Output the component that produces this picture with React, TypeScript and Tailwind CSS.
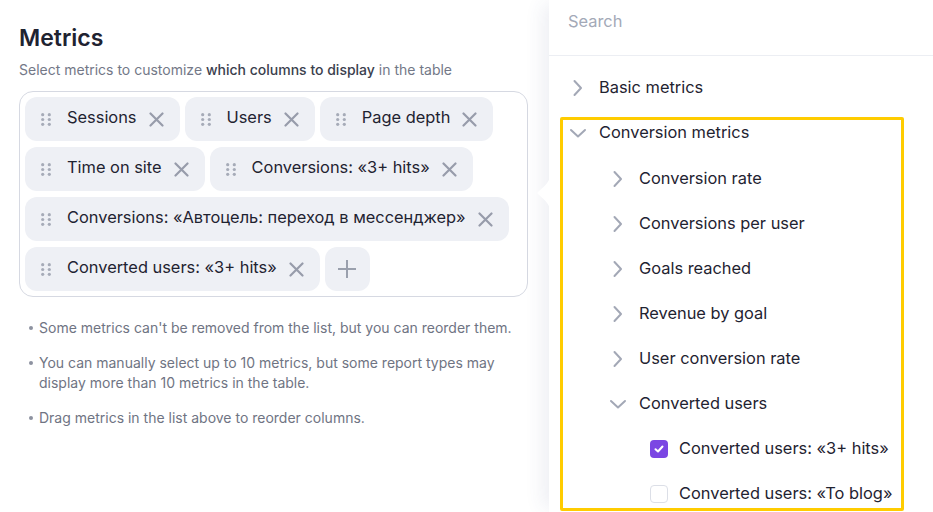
import React from 'react';

const chipRows: string[][] = [
  ['Sessions', 'Users', 'Page depth'],
  ['Time on site', 'Conversions: «3+ hits»'],
  ['Conversions: «Автоцель: переход в мессенджер»'],
  ['Converted users: «3+ hits»'],
];

const notes = [
  "Some metrics can't be removed from the list, but you can reorder them.",
  'You can manually select up to 10 metrics, but some report types may display more than 10 metrics in the table.',
  'Drag metrics in the list above to reorder columns.',
];

function DragDots() {
  return (
    <svg width="10" height="13" viewBox="0 0 10 13" className="shrink-0 text-[#a6abb8]">
      {[1.7, 6.5, 11.3].map((cy) =>
        [1.7, 8.3].map((cx) => <circle key={`${cx}-${cy}`} cx={cx} cy={cy} r="1.6" fill="currentColor" />)
      )}
    </svg>
  );
}

function Cross() {
  return (
    <svg width="15" height="15" viewBox="0 0 15 15" className="shrink-0 text-[#979cab]">
      <path d="M1.5 1.5L13.5 13.5M13.5 1.5L1.5 13.5" stroke="currentColor" strokeWidth="2.2" strokeLinecap="round" />
    </svg>
  );
}

function Chip({ label }: { label: string }) {
  return (
    <div className="flex h-[44px] items-center rounded-[12px] bg-[#eef0f5] pl-4 pr-4">
      <DragDots />
      <span className="ml-[16px] mb-[3px] whitespace-nowrap text-[16.4px] text-[#1f2331]">{label}</span>
      <span className="ml-[12px]">
        <Cross />
      </span>
    </div>
  );
}

function Chevron({ open }: { open?: boolean }) {
  return (
    <svg width="20" height="20" viewBox="0 0 20 20" className="shrink-0 text-[#a3a8b6]">
      <path
        d={open ? 'M3 7L10 13.5L17 7' : 'M6.5 3L13 10L6.5 17'}
        stroke="currentColor"
        strokeWidth="2"
        fill="none"
        strokeLinecap="round"
        strokeLinejoin="round"
      />
    </svg>
  );
}

function Checkbox({ checked }: { checked?: boolean }) {
  return (
    <div className="flex w-5 shrink-0 justify-end">
      {checked ? (
        <div className="flex h-[18px] w-[18px] items-center justify-center rounded-[4px] bg-[#7b46e3]">
          <svg width="12" height="12" viewBox="0 0 12 12">
            <path d="M2.5 6.2L5 8.5L9.5 3.5" stroke="white" strokeWidth="2" fill="none" strokeLinecap="round" strokeLinejoin="round" />
          </svg>
        </div>
      ) : (
        <div className="h-[18px] w-[18px] rounded-[4px] border border-[#dcdfe7] bg-white" />
      )}
    </div>
  );
}

function TreeRow({
  label,
  level = 0,
  kind = 'closed',
  className = 'h-[45px]',
}: {
  label: string;
  level?: number;
  kind?: 'closed' | 'open' | 'checked' | 'unchecked';
  className?: string;
}) {
  const indent = ['pl-0', 'pl-[40px]', 'pl-[80px]'][level];
  return (
    <div className={`flex items-center ${indent} ${className}`}>
      {kind === 'closed' || kind === 'open' ? <Chevron open={kind === 'open'} /> : <Checkbox checked={kind === 'checked'} />}
      <span className="ml-[11px] mb-[1px] whitespace-nowrap text-[16.4px] text-[#1f2331]">{label}</span>
    </div>
  );
}

export default function App() {
  return (
    <div className="flex h-[512px] w-[933px] overflow-hidden bg-white font-['Inter',sans-serif]">
      {/* Левая колонка */}
      <div className="w-[549px] shrink-0 pl-[19px] pr-[21px] pt-[22px]">
        <h1 className="text-[23px] font-semibold leading-[32px] text-[#1f2331]">Metrics</h1>
        <p className="mt-[6px] text-[14px] leading-[20px] text-[#737887]">
          Select metrics to customize <span className="font-medium text-[#3b404d]">which columns to display</span> in the table
        </p>

        <div className="mt-[11px] flex flex-col gap-y-[6px] rounded-[14px] border border-[#d6d9e2] p-[5px]">
          {chipRows.map((row, i) => (
            <div key={i} className="flex gap-x-[5px]">
              {row.map((label) => (
                <Chip key={label} label={label} />
              ))}
              {i === chipRows.length - 1 && (
                <div className="flex h-[44px] w-[45px] items-center justify-center rounded-[12px] bg-[#eef0f5]">
                  <svg width="20" height="20" viewBox="0 0 20 20" className="text-[#9aa0ad]">
                    <path d="M10 1V19M1 10H19" stroke="currentColor" strokeWidth="2" />
                  </svg>
                </div>
              )}
            </div>
          ))}
        </div>

        <ul className="mt-[21px] flex flex-col gap-[15px] pl-[20px]">
          {notes.map((n) => (
            <li key={n} className="relative text-[14px] leading-[20px] text-[#6f7483]">
              <span className="absolute left-[-10px] top-[8px] h-[4px] w-[4px] rounded-full bg-[#8d92a0]" />
              {n}
            </li>
          ))}
        </ul>
      </div>

      {/* Панель выбора */}
      <div className="relative flex-1 bg-white shadow-[-10px_0_18px_-4px_rgba(60,70,120,0.09)]">
        <svg width="13" height="36" viewBox="0 0 13 36" className="absolute left-[-12px] top-[175px]">
          <path d="M13 0C13 8 5 13 1 17C0.3 17.6 0.3 18.4 1 19C5 23 13 28 13 36Z" fill="white" />
        </svg>

        <div className="h-[56px] border-b border-[#eceef3] pl-[19px] pt-[10px] text-[16.4px] leading-[22px] text-[#a3a9b7]">
          Search
        </div>

        <div className="pl-[11px] pt-[9px]">
          <div className="pl-[8px]">
            <TreeRow label="Basic metrics" />
          </div>
          <div className="mt-[7px] w-[344px] rounded-[2px] border-[3px] border-[#ffcc00] pl-[5px]">
            <TreeRow label="Conversion metrics" kind="open" className="h-[36px] pb-[10px]" />
            <TreeRow label="Conversion rate" level={1} />
            <TreeRow label="Conversions per user" level={1} />
            <TreeRow label="Goals reached" level={1} />
            <TreeRow label="Revenue by goal" level={1} />
            <TreeRow label="User conversion rate" level={1} />
            <TreeRow label="Converted users" level={1} kind="open" />
            <TreeRow label="Converted users: «3+ hits»" level={2} kind="checked" />
            <TreeRow label="Converted users: «To blog»" level={2} kind="unchecked" className="h-[37px] pt-[8px]" />
          </div>
        </div>
      </div>
    </div>
  );
}
